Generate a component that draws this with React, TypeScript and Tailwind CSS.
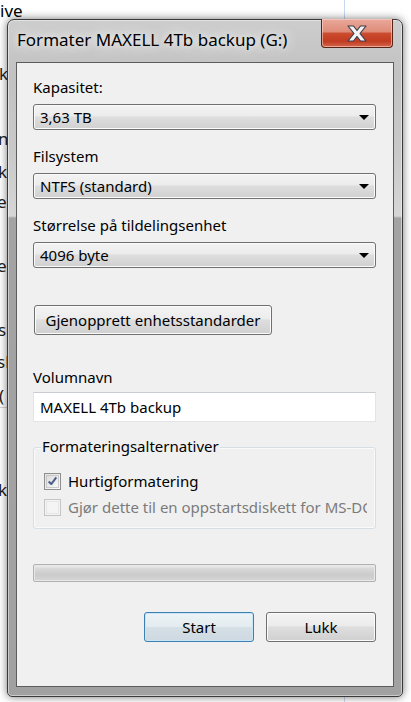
import React from "react";

const font = "font-['Noto_Sans','DejaVu_Sans',sans-serif]";

const Arrow = () => (
  <svg width="10" height="5" viewBox="0 0 10 5" className="absolute right-[6px] top-[10px]">
    <polygon points="0,0 10,0 5,5" fill="#000" />
  </svg>
);

const Dropdown = ({ value }: { value: string }) => (
  <div className="relative mt-[7px] flex h-[26px] items-center rounded-[3px] border border-[#707070] bg-[linear-gradient(#f3f3f3_0%,#ececec_45%,#dedede_50%,#d0d0d0_100%)] pl-[6px] shadow-[inset_0_0_0_1px_#fbfbfb] text-[15px] leading-[20px] text-black">
    {value}
    <Arrow />
  </div>
);

const Label = ({ text, className }: { text: string; className: string }) => (
  <div className={`text-[15px] leading-[20px] text-black ${className}`}>{text}</div>
);

const Checkbox = ({ checked, disabled }: { checked?: boolean; disabled?: boolean }) => (
  <div
    className={`flex h-[17px] w-[17px] shrink-0 items-center justify-center border ${
      disabled ? "border-[#c4c4c4] bg-[#f4f4f4]" : "border-[#8e8f8f] bg-[linear-gradient(135deg,#e0e0e0,#fbfbfb)]"
    }`}
  >
    <div
      className={`flex h-[13px] w-[13px] items-center justify-center border ${
        disabled ? "border-[#e6e6e6]" : "border-[#c9c9c9] bg-[linear-gradient(135deg,#dcdcdc,#f8f8f8)]"
      }`}
    >
      {checked && (
        <svg width="13" height="13" viewBox="0 0 13 13">
          <path d="M2 6.5 L5 9.5 L11 1.5" fill="none" stroke="#4a5e8e" strokeWidth="2.4" strokeLinejoin="round" />
        </svg>
      )}
    </div>
  </div>
);

const WinButton = ({ label, className, primary }: { label: string; className: string; primary?: boolean }) => (
  <div
    className={`flex h-[30px] items-center justify-center rounded-[3px] border text-[15px] leading-[20px] text-black ${
      primary
        ? "border-[#3c7fb1] bg-[linear-gradient(#edf3f7_0%,#e4ecf1_48%,#d5dfe6_52%,#cdd8e0_100%)] shadow-[inset_0_0_0_1px_#c9e6f8]"
        : "border-[#707070] bg-[linear-gradient(#f3f3f3_0%,#ececec_45%,#dedede_50%,#d0d0d0_100%)] shadow-[inset_0_0_0_1px_#fbfbfb]"
    } ${className}`}
  >
    {label}
  </div>
);

export default function App() {
  return (
    <div className={`relative h-[702px] w-[411px] overflow-hidden bg-white ${font}`}>
      {/* background window behind the dialog */}
      <div className="absolute left-[344px] top-0 h-full w-px bg-[#c8d8ee]" />
      <div className="absolute left-0 top-[1px] text-[17px] leading-[20px] text-black">ive</div>
      <div className="absolute left-[-1px] top-[64px] text-[17px] leading-[20px] text-[#222]">k</div>
      <div className="absolute left-[-2px] top-[129px] text-[17px] leading-[20px] text-[#222]">n</div>
      <div className="absolute left-[-2px] top-[162px] text-[17px] leading-[20px] text-[#222]">k</div>
      <div className="absolute left-[-3px] top-[192px] text-[17px] leading-[20px] text-[#222]">er</div>
      <div className="absolute left-[-3px] top-[256px] text-[17px] leading-[20px] text-[#222]">e</div>
      <div className="absolute left-[-2px] top-[320px] text-[17px] leading-[20px] text-[#222]">s</div>
      <div className="absolute left-[-3px] top-[352px] text-[17px] leading-[20px] text-[#222]">sl</div>
      <div className="absolute left-[-1px] top-[386px] text-[17px] leading-[20px] text-[#222]">(</div>
      <div className="absolute left-0 top-[407px] h-px w-[8px] bg-[#d6d6d6]" />
      <div className="absolute left-[-2px] top-[480px] text-[17px] leading-[20px] text-[#222]">k</div>

      {/* dialog window */}
      <div className="absolute left-[7px] top-[19px] flex h-[678px] w-[396px] flex-col rounded-t-[7px] rounded-b-[5px] border border-[#3a3a3a] bg-[linear-gradient(#cdcdcd_0%,#c2c2c2_8%,#c9c9c9_20%,#d6d6d6_29%,#a3a3a3_29.3%,#a1a1a1_100%)] shadow-[0_0_8px_rgba(0,0,0,0.55),inset_0_0_0_1px_rgba(255,255,255,0.45)]">
        <div className="relative h-[42px] shrink-0">
          <div className="pl-[9px] pt-[8px] text-[17px] leading-[24px] text-black [text-shadow:0_0_6px_#f2f2f2,0_0_12px_#ececec,0_0_18px_#e6e6e6]">
            Formater MAXELL 4Tb backup (G:)
          </div>
          <div className="absolute right-[9px] top-[-1px] flex h-[29px] w-[72px] items-center justify-center rounded-b-[4px] border border-t-0 border-[#5b2217] bg-[linear-gradient(#e9a89a_0%,#df8c79_45%,#cb4a2e_52%,#c23c22_80%,#d3674c_100%)] shadow-[inset_0_0_0_1px_rgba(255,220,210,0.55)]">
            <svg width="20" height="17" viewBox="0 0 20 17">
              <polygon
                points="1,1 6.5,1 10,5.5 13.5,1 19,1 13,8.5 19,16 13.5,16 10,11.5 6.5,16 1,16 7,8.5"
                fill="#f4f4f4"
                stroke="#3e3e4e"
                strokeWidth="1.2"
                strokeLinejoin="round"
              />
            </svg>
          </div>
        </div>

        <div className="mx-[8px] mb-[9px] flex flex-1 flex-col border border-[#5c5c5c] bg-[#f0f0f0] pl-[16px] pr-[17px] pt-[14px]">
          <Label text="Kapasitet:" className="" />
          <Dropdown value="3,63 TB" />

          <Label text="Filsystem" className="mt-[16px]" />
          <Dropdown value="NTFS (standard)" />

          <Label text="Størrelse på tildelingsenhet" className="mt-[16px]" />
          <Dropdown value="4096 byte" />

          <WinButton label="Gjenopprett enhetsstandarder" className="ml-[1px] mt-[37px] w-[238px]" />

          <Label text="Volumnavn" className="mt-[32px]" />
          <div className="mt-[5px] flex h-[30px] items-center border border-[#e2e4e7] border-t-[#c9ccd1] bg-white pl-[6px] text-[15px] leading-[20px] text-black">
            MAXELL 4Tb backup
          </div>

          <div className="relative mt-[25px] h-[82px] rounded-[3px] border border-[#d5dfe5] pl-[10px] pr-[8px] pt-[23px] shadow-[inset_0_0_0_1px_#fafafa]">
            <div className="absolute left-[7px] top-[-12px] bg-[#f0f0f0] px-[1px] text-[15px] leading-[20px] text-black">
              Formateringsalternativer
            </div>
            <div className="flex h-[20px] items-center gap-[7px] text-[15px] leading-[20px] text-black">
              <Checkbox checked />
              <span>Hurtigformatering</span>
            </div>
            <div className="mt-[6px] flex h-[20px] items-center gap-[7px] text-[15px] leading-[20px] text-[#7b7b7b]">
              <Checkbox disabled />
              <span className="overflow-hidden whitespace-nowrap">Gjør dette til en oppstartsdiskett for MS-DOS</span>
            </div>
          </div>

          <div className="mt-[35px] h-[18px] rounded-[2px] border border-[#b2b2b2] bg-[linear-gradient(#f3f3f3_0%,#dadada_20%,#cbcbcb_60%,#d6d6d6_100%)] shadow-[inset_0_0_0_1px_#e8e8e8]" />

          <div className="mt-[30px] flex justify-end gap-[12px]">
            <WinButton label="Start" className="w-[110px]" primary />
            <WinButton label="Lukk" className="w-[110px]" />
          </div>
        </div>
      </div>
    </div>
  );
}
